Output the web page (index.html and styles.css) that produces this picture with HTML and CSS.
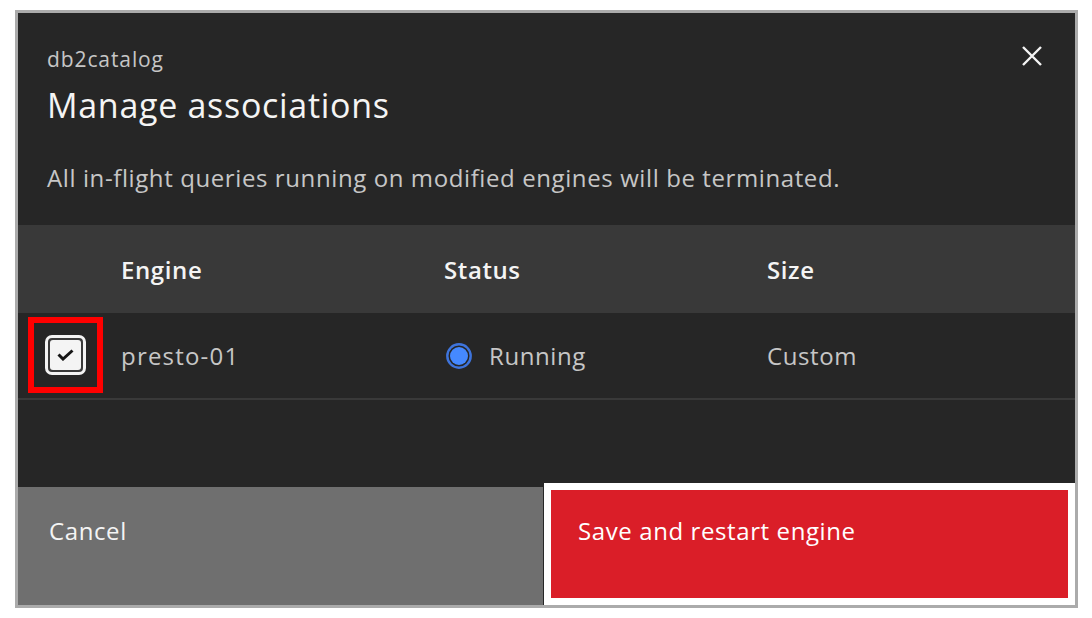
FILE: index.html
```html
<!DOCTYPE html>
<html lang="en">
<head>
<meta charset="utf-8">
<title>Manage associations</title>
<link rel="stylesheet" href="styles.css">
</head>
<body>
<div class="modal">
  <div class="header">
    <div class="titles">
      <div class="label">db2catalog</div>
      <h2 class="heading">Manage associations</h2>
    </div>
    <button class="close" aria-label="Close">
      <svg width="22" height="22" viewBox="0 0 22 22"><path d="M2 2 L20 20 M20 2 L2 20" stroke="#f4f4f4" stroke-width="2.4" fill="none"/></svg>
    </button>
  </div>
  <p class="desc">All in-flight queries running on modified engines will be terminated.</p>
  <div class="table">
    <div class="row head">
      <div class="cell"></div>
      <div class="cell">Engine</div>
      <div class="cell">Status</div>
      <div class="cell">Size</div>
    </div>
    <div class="row body">
      <div class="cell checkcell">
        <div class="highlight">
          <div class="checkbox">
            <div class="checkbox-inner">
              <svg width="17" height="12" viewBox="0 0 17 12"><path d="M1.5 5.5 L6 10 L15.5 1.5" stroke="#161616" stroke-width="3" fill="none"/></svg>
            </div>
          </div>
        </div>
      </div>
      <div class="cell name">presto-01</div>
      <div class="cell status">
        <svg width="26" height="26" viewBox="0 0 26 26"><circle cx="13" cy="13" r="11.7" fill="none" stroke="#3e74dc" stroke-width="2.4"/><circle cx="13" cy="13" r="9" fill="#4589ff"/></svg>
        <span>Running</span>
      </div>
      <div class="cell">Custom</div>
    </div>
  </div>
  <div class="spacer"></div>
  <div class="footer">
    <button class="btn cancel">Cancel</button>
    <div class="primary-wrap">
      <button class="btn primary">Save and restart engine</button>
    </div>
  </div>
</div>
</body>
</html>
```
FILE: styles.css
```css
* { box-sizing: border-box; }
html, body { margin: 0; padding: 0; background: #ffffff; }
body { font-family: "Open Sans", "Noto Sans", sans-serif; }

.modal {
  margin: 10px 0 0 15px;
  width: 1063px;
  height: 598px;
  border: 3px solid #ababab;
  background: #262626;
  display: flex;
  flex-direction: column;
}

.header {
  display: flex;
  justify-content: space-between;
  align-items: flex-start;
  padding: 34px 0 0 29px;
}
.label {
  font-size: 21px;
  line-height: 24px;
  letter-spacing: 0.9px;
  color: #c6c6c6;
}
.heading {
  margin: 14px 0 0 0;
  font-size: 34px;
  line-height: 40px;
  font-weight: 400;
  letter-spacing: 0.7px;
  color: #f4f4f4;
}
.close {
  background: none;
  border: none;
  padding: 0;
  margin: -2px 32px 0 0;
  width: 22px;
  height: 22px;
  display: flex;
}

.desc {
  margin: 38px 0 0 29px;
  font-size: 24px;
  line-height: 30px;
  letter-spacing: 0.6px;
  color: #c6c6c6;
}

.table { margin-top: 32px; }
.row {
  display: grid;
  grid-template-columns: 103px 323px 323px 1fr;
  align-items: center;
  font-size: 24px;
  letter-spacing: 0.6px;
}
.row.head {
  height: 88px;
  background: #393939;
  color: #f4f4f4;
  font-weight: 600;
}
.row.body {
  height: 87px;
  border-bottom: 2px solid #393939;
  color: #c6c6c6;
}
.name { letter-spacing: 1.2px; }
.checkcell { padding-left: 10px; }
.highlight {
  width: 75px;
  height: 76px;
  border: 6px solid #ff0000;
  display: flex;
  align-items: center;
  justify-content: center;
  margin-top: -1px;
}
.checkbox {
  width: 41px;
  height: 40px;
  border: 3px solid #f4f4f4;
  border-radius: 7px;
  padding: 2px;
  background: #3a3a3a;
}
.checkbox-inner {
  width: 100%;
  height: 100%;
  background: #f4f4f4;
  border-radius: 3px;
  display: flex;
  align-items: center;
  justify-content: center;
}
.status {
  display: flex;
  align-items: center;
  gap: 17px;
  margin-left: 2px;
}

.spacer { flex: 1; }

.footer {
  height: 118px;
  display: grid;
  grid-template-columns: 525px 1fr;
}
.btn {
  border: none;
  font-family: inherit;
  font-size: 24px;
  letter-spacing: 0.6px;
  text-align: left;
  color: #f4f4f4;
  cursor: pointer;
}
.cancel {
  background: #6f6f6f;
  padding: 27px 0 0 31px;
  height: 100%;
  display: flex;
  align-items: flex-start;
}
.primary-wrap {
  padding: 3px 7px 7px 8px;
  display: flex;
}
.primary {
  flex: 1;
  background: #da1e28;
  outline: 7px solid #ffffff;
  padding: 24px 0 0 27px;
  display: flex;
  align-items: flex-start;
  color: #ffffff;
}
```
